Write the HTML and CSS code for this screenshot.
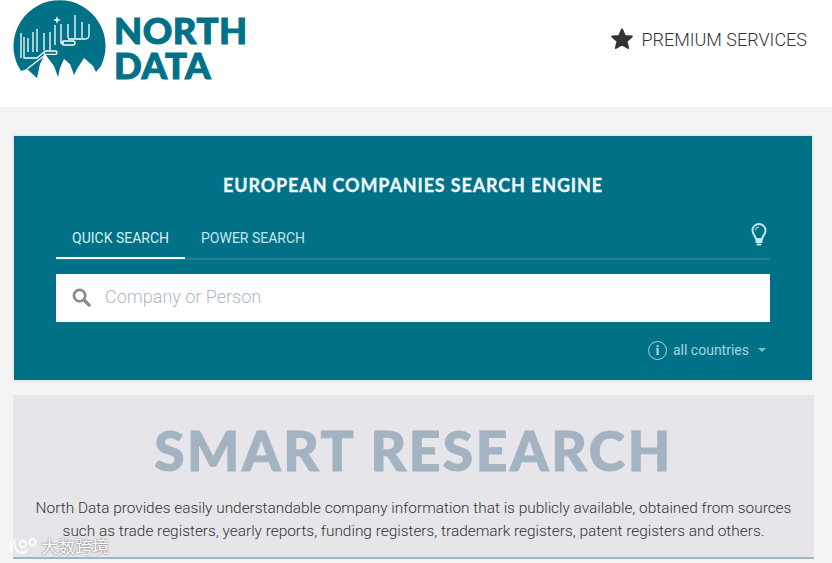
FILE: index.html
```html
<!DOCTYPE html>
<html lang="en">
<head>
    <meta charset="UTF-8">
    <meta name="viewport" content="width=device-width, initial-scale=1.0">
    <title>North Data</title>
    <link rel="stylesheet" href="styles.css">
</head>
<body>
    <header class="site-header">
        <a class="logo" href="#">
            <svg class="logo-mark" viewBox="12 0 96 82" width="96" height="82">
                <path fill="#007187" d="M18 66 A46 46 0 1 1 101 66 L96 72 L93 66 L84 58 L77 69 L74 75 L70 64 L64 59 L60 68 L58 77 L54 66 L45 54 L40 64 L37 78 L27 69 L21 71 L17 64 Z"/>
                <g fill="none" stroke="#fff" stroke-width="1.3">
                    <path d="M21 33 V58 M24 37 V58 H37 L44 52 M28 38 V52 M33 32 V52 M37 29 V52 M44 33 V50 M50 32 V50 M55 25 V45 M61 24 V43 H64 M68 24 V38 M75 15 V38 M82 22 V38 M89 24 V35 Q89 39 85 39 H68"/>
                    <rect x="62" y="41" width="13" height="4" rx="2"/>
                    <rect x="44" y="51" width="13" height="3.4" rx="1.7"/>
                    <path d="M45 55 L27 69"/>
                </g>
                <path fill="#fff" d="M57 16 L58 19 L61 20 L58 21 L57 24 L56 21 L53 20 L56 19 Z"/>
            </svg>
            <span class="logo-text"><span class="logo-line">NORTH</span><span class="logo-line">DATA</span></span>
        </a>
        <a class="premium-link" href="#">
            <svg class="star-icon" viewBox="0 0 24 24" width="24" height="24">
                <path fill="#333" stroke="#333" stroke-width="2" stroke-linejoin="round" d="M12 2.5 L14.8 9 L21.8 9.6 L16.5 14.2 L18.1 21 L12 17.4 L5.9 21 L7.5 14.2 L2.2 9.6 L9.2 9 Z"/>
            </svg>
            <span>PREMIUM SERVICES</span>
        </a>
    </header>

    <main class="content">
        <section class="search-card">
            <h2 class="search-title">EUROPEAN COMPANIES SEARCH ENGINE</h2>
            <div class="tabs">
                <a class="tab active" href="#">QUICK SEARCH</a>
                <a class="tab" href="#">POWER SEARCH</a>
                <svg class="bulb-icon" viewBox="0 0 18 24" width="18" height="24">
                    <path fill="none" stroke="#bfe6ec" stroke-width="2" d="M6 16 C5 12 2.5 11 2.5 7.5 A6.5 6.5 0 0 1 15.5 7.5 C15.5 11 13 12 12 16 Z"/>
                    <path fill="none" stroke="#bfe6ec" stroke-width="1" d="M5.5 7.5 A3.5 3.5 0 0 1 9 4"/>
                    <rect x="5.5" y="17" width="7" height="3" fill="#bfe6ec"/>
                    <rect x="6.5" y="20.5" width="5" height="2" rx="1" fill="#bfe6ec"/>
                </svg>
            </div>
            <div class="search-box">
                <svg class="search-icon" viewBox="0 0 20 20" width="19" height="19">
                    <circle cx="8" cy="8" r="6" fill="none" stroke="#8a8a8a" stroke-width="2.8"/>
                    <path d="M12.5 12.5 L18 18" stroke="#8a8a8a" stroke-width="3.4" stroke-linecap="round"/>
                </svg>
                <span class="search-placeholder">Company or Person</span>
            </div>
            <div class="country-row">
                <span class="info-icon">i</span>
                <span>all countries</span>
                <span class="caret"></span>
            </div>
        </section>

        <section class="intro">
            <h1 class="intro-title">SMART RESEARCH</h1>
            <p class="intro-text">North Data provides easily understandable company information that is publicly available, obtained from sources such as trade registers, yearly reports, funding registers, trademark registers, patent registers and others.</p>
        </section>
    </main>

    <div class="watermark">
        <svg viewBox="0 0 34 20" width="32" height="20">
            <g fill="none" stroke="#fff" stroke-width="1.8">
                <path d="M3 5 V15 M7 3 C6 10 8 17 15 17 C18 17 20 15 21 13"/>
                <circle cx="16" cy="8" r="3.5"/>
                <circle cx="26" cy="6" r="3.5"/>
            </g>
        </svg>
        <span>大数跨境</span>
    </div>
</body>
</html>
```

FILE: styles.css
```css
body {
    font-family: Roboto, "Liberation Sans", sans-serif;
    font-weight: 300;
    margin: 0;
    background: #f4f4f4;
    color: #333;
    height: 563px;
    overflow: hidden;
    position: relative;
}

a {
    color: inherit;
    text-decoration: none;
}

.site-header {
    height: 107px;
    background: #fff;
    display: flex;
    justify-content: space-between;
    align-items: flex-start;
    padding: 0 25px 0 12px;
    box-sizing: border-box;
}

.logo {
    display: flex;
    align-items: flex-start;
    gap: 6px;
}

.logo-text {
    display: flex;
    flex-direction: column;
    gap: 7px;
    font-family: Lato, sans-serif;
    font-weight: 900;
    font-size: 36.5px;
    line-height: 28px;
    letter-spacing: 0.5px;
    -webkit-text-stroke: 1px #007187;
    color: #007187;
    padding-top: 16px;
}

.logo-line {
    display: block;
    height: 28px;
}

.premium-link {
    display: flex;
    align-items: center;
    gap: 7px;
    font-size: 18px;
    color: #333;
    padding-top: 27px;
}

.content {
    padding: 29px 18px 0 13px;
}

.search-card {
    margin-left: 1px;
    margin-right: 2px;
    height: 244px;
    box-sizing: border-box;
    background: #007187;
    padding: 0 42px;
    box-shadow: 0 0 3px rgba(0, 0, 0, 0.15);
}

.search-title {
    margin: 0;
    padding-top: 39px;
    font-family: Lato, sans-serif;
    font-weight: 700;
    font-size: 18px;
    line-height: 20px;
    letter-spacing: 0.85px;
    -webkit-text-stroke: 0.3px #eef8fa;
    text-align: center;
    color: #eef8fa;
}

.tabs {
    display: flex;
    align-items: center;
    height: 40px;
    margin-top: 23px;
    border-bottom: 2px solid #257f92;
    position: relative;
}

.tab {
    height: 40px;
    box-sizing: border-box;
    margin-bottom: -2px;
    padding: 0 16px;
    font-size: 14px;
    line-height: 39px;
    font-weight: 400;
    color: #c4e6ec;
}

.tab.active {
    border-bottom: 2px solid #fff;
    color: #d6eff3;
}

.bulb-icon {
    position: absolute;
    right: 2px;
    top: 5px;
}

.search-box {
    margin-top: 14px;
    height: 48px;
    background: #fff;
    display: flex;
    align-items: center;
    padding-left: 16px;
    gap: 14px;
}

.search-placeholder {
    font-size: 18px;
    color: #adb9c4;
    margin-bottom: 3px;
}

.search-icon {
    margin-bottom: 1px;
}

.country-row {
    display: flex;
    justify-content: flex-end;
    align-items: center;
    gap: 6px;
    height: 20px;
    margin-top: 18px;
    padding-right: 4px;
    font-size: 14px;
    font-weight: 400;
    color: #a5d5de;
}

.info-icon {
    width: 17px;
    height: 17px;
    border: 1px solid #a5d5de;
    border-radius: 50%;
    font-family: "Liberation Serif", serif;
    font-weight: 700;
    font-size: 14px;
    line-height: 17px;
    text-align: center;
}

.caret {
    margin-left: 3px;
    width: 0;
    height: 0;
    border-left: 4.5px solid transparent;
    border-right: 4.5px solid transparent;
    border-top: 4px solid #7fbecb;
}

.intro {
    margin-top: 15px;
    height: 164px;
    box-sizing: border-box;
    background: #e5e5ea;
    border-bottom: 2px solid #a4b3c1;
    text-align: center;
    overflow: hidden;
}

.intro-title {
    margin: 0;
    padding-top: 25px;
    font-family: Lato, sans-serif;
    font-weight: 900;
    font-size: 55px;
    line-height: 60px;
    letter-spacing: 2.6px;
    -webkit-text-stroke: 1px #a4b3c1;
    color: #a4b3c1;
}

.intro-text {
    margin: 17px 10px 0;
    font-size: 15.4px;
    line-height: 23px;
    color: #333;
}

.watermark {
    position: absolute;
    left: 8px;
    top: 536px;
    display: flex;
    align-items: center;
    gap: 1px;
    font-family: "Noto Sans CJK SC", sans-serif;
    font-weight: 400;
    font-size: 17px;
    line-height: 20px;
    color: #fff;
    text-shadow: 0 0 2px #555;
}
```
